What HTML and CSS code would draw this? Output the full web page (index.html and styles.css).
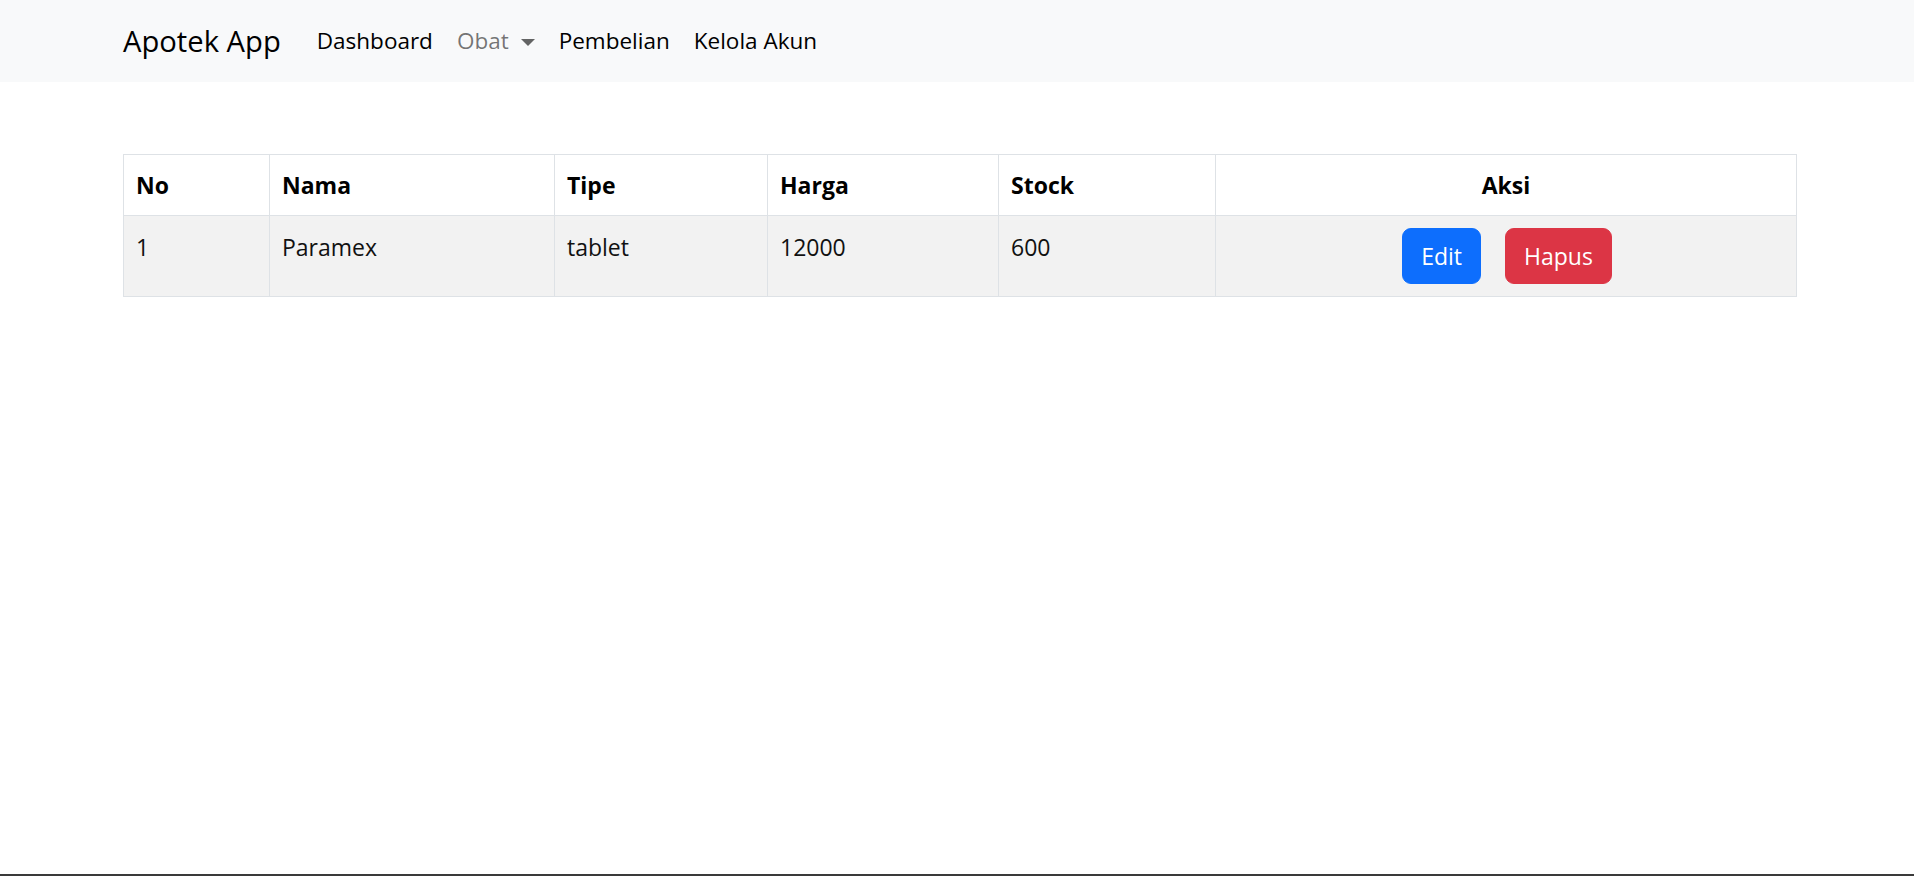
FILE: index.html
```html
<!DOCTYPE html>
<html lang="id">
<head>
<meta charset="utf-8">
<title>Apotek App</title>
<link rel="stylesheet" href="styles.css">
</head>
<body>
<div class="page">
  <nav class="navbar">
    <div class="nav-inner">
      <a class="brand" href="#">Apotek App</a>
      <ul class="nav">
        <li><a class="nav-link" href="#">Dashboard</a></li>
        <li><a class="nav-link muted" href="#">Obat<span class="caret"></span></a></li>
        <li><a class="nav-link" href="#">Pembelian</a></li>
        <li><a class="nav-link" href="#">Kelola Akun</a></li>
      </ul>
    </div>
  </nav>
  <main class="main">
    <table class="table">
      <colgroup>
        <col class="c-no"><col class="c-nama"><col class="c-tipe"><col class="c-harga"><col class="c-stock"><col>
      </colgroup>
      <thead>
        <tr>
          <th>No</th>
          <th>Nama</th>
          <th>Tipe</th>
          <th>Harga</th>
          <th>Stock</th>
          <th class="center">Aksi</th>
        </tr>
      </thead>
      <tbody>
        <tr class="striped">
          <td>1</td>
          <td>Paramex</td>
          <td>tablet</td>
          <td>12000</td>
          <td>600</td>
          <td class="center">
            <div class="actions">
              <a class="btn btn-primary" href="#">Edit</a>
              <a class="btn btn-danger" href="#">Hapus</a>
            </div>
          </td>
        </tr>
      </tbody>
    </table>
  </main>
  <div class="bottom-line"></div>
</div>
</body>
</html>
```
FILE: styles.css
```css
* { box-sizing: border-box; }
html, body { margin: 0; padding: 0; }
body {
  font-family: "Open Sans", "Noto Sans", "Liberation Sans", sans-serif;
  font-size: 24px;
  line-height: 36px;
  color: #212529;
  background: #fff;
}
.page {
  display: flex;
  flex-direction: column;
  height: 100vh;
}
.navbar {
  background: #f8f9fa;
  height: 82px;
  display: flex;
  align-items: center;
  flex: none;
}
.nav-inner {
  display: flex;
  align-items: center;
  padding-left: 123px;
}
.brand {
  font-size: 29.2px;
  line-height: 44px;
  color: #000;
  text-decoration: none;
  margin-right: 24px;
}
.nav {
  list-style: none;
  margin: 0;
  padding: 0;
  display: flex;
}
.nav-link {
  display: flex;
  align-items: center;
  padding: 12px 12px;
  color: #000;
  text-decoration: none;
  font-size: 22.5px;
  line-height: 36px;
}
.nav-link.muted { color: rgba(0,0,0,.55); }
.caret {
  display: inline-block;
  margin-left: 12px;
  margin-top: 2px;
  width: 0;
  height: 0;
  border-top: 7px solid rgba(0,0,0,.6);
  border-left: 7px solid transparent;
  border-right: 7px solid transparent;
}
.main {
  flex: 1;
  padding: 72px 117px 0 123px;
}
.table {
  width: 1674px;
  border-collapse: collapse;
  table-layout: fixed;
}
.c-no { width: 146px; }
.c-nama { width: 285px; }
.c-tipe { width: 213px; }
.c-harga { width: 231px; }
.c-stock { width: 217px; }
.table th, .table td {
  border: 1px solid #dee2e6;
  padding: 12px 12px;
  text-align: left;
  vertical-align: top;
  font-size: 23px;
  line-height: 36px;
  color: #000;
}
.table td { color: #111; padding-top: 13px; padding-bottom: 11px; }
.table th { font-weight: 700; }
.table .center { text-align: center; }
.table td.center { padding-top: 12px; padding-bottom: 12px; }
.striped td { background: #f2f2f2; }
.actions {
  display: flex;
  justify-content: center;
  gap: 24px;
  padding-left: 2px;
}
.btn {
  display: inline-block;
  padding: 9px 18px;
  font-size: 23px;
  line-height: 36px;
  border-radius: 9px;
  color: #fff;
  text-decoration: none;
  border: 1px solid transparent;
}
.btn-primary { background: #0d6efd; border-color: #0d6efd; }
.btn-danger { background: #dc3545; border-color: #dc3545; }
.bottom-line {
  flex: none;
  height: 2px;
  background: #3a3a3a;
}
```
